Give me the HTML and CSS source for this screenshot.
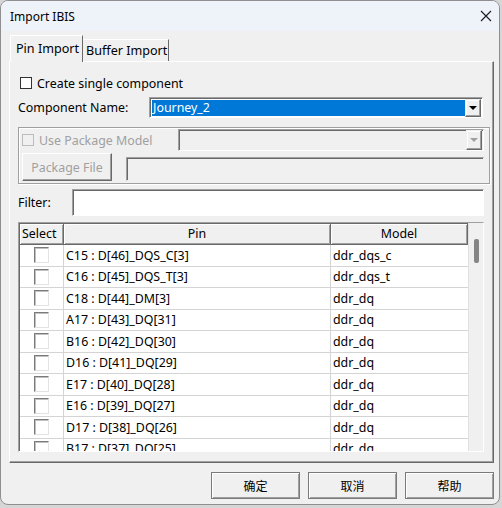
FILE: index.html
```html
<!DOCTYPE html>
<html>
<head>
<meta charset="utf-8">
<link rel="stylesheet" href="styles.css">
</head>
<body>
<div class="dialog">
  <div class="titlebar">
    <span class="title">Import IBIS</span>
    <svg class="close" width="12" height="12" viewBox="0 0 12 12"><path d="M1 1 L11 11 M11 1 L1 11" stroke="#1a1a1a" stroke-width="1.1" fill="none"/></svg>
  </div>
  <div class="content">
    <div class="tabs">
      <div class="tab active">Pin Import</div>
      <div class="tab">Buffer Import</div>
    </div>
    <div class="panel">
      <div class="check-row">
        <span class="cb"></span><span>Create single component</span>
      </div>
      <div class="name-row">
        <span class="name-label">Component Name:</span>
        <div class="combo">
          <div class="combo-text"><span class="sel">Journey_2</span></div>
          <div class="drop"><span class="arrow"></span></div>
        </div>
      </div>
      <div class="group">
        <div class="group-row1">
          <div class="pkg-check"><span class="cb disabled"></span><span>Use Package Model</span></div>
          <div class="combo disabled-combo">
            <div class="combo-text"></div>
            <div class="drop"><span class="arrow"></span></div>
          </div>
        </div>
        <div class="group-row2">
          <div class="btn disabled-btn">Package File</div>
          <div class="field disabled-field"></div>
        </div>
      </div>
      <div class="filter-row">
        <span class="filter-label">Filter:</span>
        <div class="field filter-field"></div>
      </div>
      <div class="list">
        <div class="grid">
          <div class="row head">
            <div class="hc c-sel">Select</div>
            <div class="hc c-pin">Pin</div>
            <div class="hc c-model">Model</div>
          </div>
          <div class="row"><div class="cell c-sel"><span class="rcb"></span></div><div class="cell c-pin">C15 : D[46]_DQS_C[3]</div><div class="cell c-model">ddr_dqs_c</div></div>
          <div class="row"><div class="cell c-sel"><span class="rcb"></span></div><div class="cell c-pin">C16 : D[45]_DQS_T[3]</div><div class="cell c-model">ddr_dqs_t</div></div>
          <div class="row"><div class="cell c-sel"><span class="rcb"></span></div><div class="cell c-pin">C18 : D[44]_DM[3]</div><div class="cell c-model">ddr_dq</div></div>
          <div class="row"><div class="cell c-sel"><span class="rcb"></span></div><div class="cell c-pin">A17 : D[43]_DQ[31]</div><div class="cell c-model">ddr_dq</div></div>
          <div class="row"><div class="cell c-sel"><span class="rcb"></span></div><div class="cell c-pin">B16 : D[42]_DQ[30]</div><div class="cell c-model">ddr_dq</div></div>
          <div class="row"><div class="cell c-sel"><span class="rcb"></span></div><div class="cell c-pin">D16 : D[41]_DQ[29]</div><div class="cell c-model">ddr_dq</div></div>
          <div class="row"><div class="cell c-sel"><span class="rcb"></span></div><div class="cell c-pin">E17 : D[40]_DQ[28]</div><div class="cell c-model">ddr_dq</div></div>
          <div class="row"><div class="cell c-sel"><span class="rcb"></span></div><div class="cell c-pin">E16 : D[39]_DQ[27]</div><div class="cell c-model">ddr_dq</div></div>
          <div class="row"><div class="cell c-sel"><span class="rcb"></span></div><div class="cell c-pin">D17 : D[38]_DQ[26]</div><div class="cell c-model">ddr_dq</div></div>
          <div class="row"><div class="cell c-sel"><span class="rcb"></span></div><div class="cell c-pin">B17 : D[37]_DQ[25]</div><div class="cell c-model">ddr_dq</div></div>
        </div>
        <div class="scrollbar"><span class="thumb"></span></div>
      </div>
    </div>
    <div class="buttons">
      <div class="btn dlg-btn">确定</div>
      <div class="btn dlg-btn">取消</div>
      <div class="btn dlg-btn">帮助</div>
    </div>
  </div>
</div>
</body>
</html>
```

FILE: styles.css
```css
* { box-sizing: border-box; }
html, body { margin: 0; padding: 0; }
body {
  background: #d6d6d6;
  width: 502px;
  height: 508px;
  overflow: hidden;
  font-family: "Noto Sans", "Noto Sans CJK SC", sans-serif;
  font-size: 12.4px;
  color: #000;
}
.dialog {
  width: 500px;
  height: 505px;
  border: 1px solid #8f8f8f;
  border-radius: 8px;
  background: #f0f0f0;
  overflow: hidden;
  display: flex;
  flex-direction: column;
}
.titlebar {
  height: 30px;
  flex: none;
  background: #eef2f9;
  display: flex;
  align-items: center;
  justify-content: space-between;
  padding: 0 7px 0 9px;
  font-size: 12px;
}
.close { display: block; }
.content {
  flex: 1;
  padding: 4px 0 0 8px;
  display: flex;
  flex-direction: column;
}
.tabs {
  display: flex;
  align-items: flex-end;
  height: 26px;
  padding-left: 1px;
  position: relative;
  z-index: 2;
}
.tab {
  height: 22px;
  padding: 0 0 0 3px;
  display: flex;
  align-items: center;
  white-space: nowrap;
  border-top: 1px solid #fff;
  border-left: 1px solid #fff;
  border-right: 1px solid #696969;
  background: #f0f0f0;
  font-size: 12.6px;
}
.tab.active {
  height: 27px;
  margin-bottom: -1px;
  padding: 0 0 2px 5px;
  width: 73px;
}
.tab:not(.active) { width: 86px; border-left: none; }
.panel {
  width: 485px;
  height: 402px;
  border-top: 1px solid #fff;
  border-left: 1px solid #fff;
  border-right: 1px solid #696969;
  border-bottom: 1px solid #696969;
  box-shadow: inset -1px -1px 0 #a0a0a0;
  padding: 11px 0 0 8px;
  display: flex;
  flex-direction: column;
}
.check-row {
  height: 20px;
  display: flex;
  align-items: center;
  gap: 5px;
  padding-left: 2px;
}
.cb {
  width: 12px;
  height: 12px;
  border: 1px solid #333;
  background: #fff;
  flex: none;
}
.cb.disabled { border-color: #bcbcbc; background: #f0f0f0; }
.name-row {
  margin-top: 4px;
  height: 21px;
  display: flex;
  align-items: center;
}
.name-label { width: 131px; }
.combo {
  width: 334px;
  height: 21px;
  display: flex;
  border: 1px solid;
  border-color: #a0a0a0 #fff #fff #a0a0a0;
  box-shadow: inset 1px 1px 0 #696969;
  background: #fff;
  padding: 2px 1px 1px 2px;
}
.combo-text { flex: 1; display: flex; }
.sel {
  flex: 1;
  background: #0078d7;
  color: #fff;
  line-height: 16px;
  padding-left: 1px;
}
.drop {
  width: 16px;
  margin-top: -1px;
  margin-bottom: -1px;
  border: 1px solid;
  border-color: #f0f0f0 #696969 #696969 #f0f0f0;
  box-shadow: inset -1px -1px 0 #a0a0a0, inset 1px 1px 0 #fff;
  background: #f0f0f0;
  display: flex;
  align-items: center;
  justify-content: center;
}
.arrow {
  width: 0; height: 0;
  border-left: 4px solid transparent;
  border-right: 4px solid transparent;
  border-top: 4px solid #000;
}
.group {
  margin-top: 9px;
  width: 472px;
  height: 57px;
  border: 1px solid #a0a0a0;
  box-shadow: inset 1px 1px 0 #fff, 1px 1px 0 #fff;
  padding: 1px 5px 0 3px;
  display: flex;
  flex-direction: column;
  color: #a0a0a0;
}
.group-row1 {
  height: 22px;
  display: flex;
  align-items: center;
  justify-content: space-between;
}
.pkg-check { display: flex; align-items: center; gap: 5px; }
.disabled-combo {
  width: 306px;
  height: 22px;
  background: #f0f0f0;
  padding: 1px;
}
.disabled-combo .arrow { border-top-color: #a0a0a0; }
.group-row2 {
  margin-top: 2px;
  display: flex;
  align-items: flex-end;
  justify-content: space-between;
  height: 28px;
}
.btn {
  display: flex;
  align-items: center;
  justify-content: center;
  background: #f0f0f0;
  border: 1px solid;
  border-color: #fff #696969 #696969 #fff;
  box-shadow: inset -1px -1px 0 #a0a0a0;
}
.disabled-btn { width: 90px; height: 28px; color: #a0a0a0; }
.field {
  border: 1px solid;
  border-color: #a0a0a0 #fff #fff #a0a0a0;
  box-shadow: inset 1px 1px 0 #696969;
}
.disabled-field { width: 358px; height: 24px; background: #f0f0f0; border-color: #a0a0a0 #f0f0f0 #f0f0f0 #a0a0a0; }
.filter-row {
  margin-top: 5px;
  height: 27px;
  display: flex;
  align-items: center;
}
.filter-label { width: 54px; }
.filter-field { width: 412px; height: 27px; background: #fff; }
.list {
  margin-top: 6px;
  width: 466px;
  height: 230px;
  border: 1px solid;
  border-color: #a0a0a0 #fff #fff #a0a0a0;
  box-shadow: inset 1px 1px 0 #696969;
  display: flex;
  background: #fff;
  overflow: hidden;
}
.grid {
  width: 449px;
  flex: none;
  padding: 1px 0 0 1px;
}
.row {
  display: grid;
  grid-template-columns: 44px 267px 137px;
  height: 21.5px;
}
.row.head { height: 21px; }
.hc {
  background: #f0f0f0;
  border-right: 1px solid #696969;
  border-bottom: 1px solid #696969;
  box-shadow: inset 1px 1px 0 #fff, inset -1px -1px 0 #a0a0a0;
  display: flex;
  align-items: center;
  justify-content: center;
  line-height: 1;
}
.hc.c-sel { justify-content: flex-start; padding-left: 2px; }
.cell {
  border-right: 1px solid #d4d4d4;
  border-bottom: 1px solid #d4d4d4;
  display: flex;
  align-items: center;
  padding-left: 2px;
  white-space: nowrap;
}
.cell.c-sel { justify-content: center; padding-left: 0; }
.cell.c-model { border-right: none; }
.rcb {
  width: 15px;
  height: 16px;
  border: 1px solid;
  border-color: #7a7a7a #e3e3e3 #e3e3e3 #7a7a7a;
  box-shadow: inset 1px 1px 0 #c0c0c0;
  background: #fff;
}
.scrollbar {
  flex: 1;
  background: #f0f0f0;
  border-left: 1px solid #e0e0e0;
  position: relative;
}
.thumb {
  position: absolute;
  left: 5px;
  top: 16px;
  width: 5px;
  height: 24px;
  border-radius: 2px;
  background: #858585;
}
.buttons {
  margin-top: 9px;
  width: 485px;
  display: flex;
  justify-content: flex-end;
  gap: 8px;
}
.dlg-btn {
  width: 89px;
  height: 27px;
  font-size: 12px;
  border: 1px solid #7a7a7a;
  box-shadow: inset 1px 1px 0 #fff, inset -1px -1px 0 #a0a0a0;
}
```
